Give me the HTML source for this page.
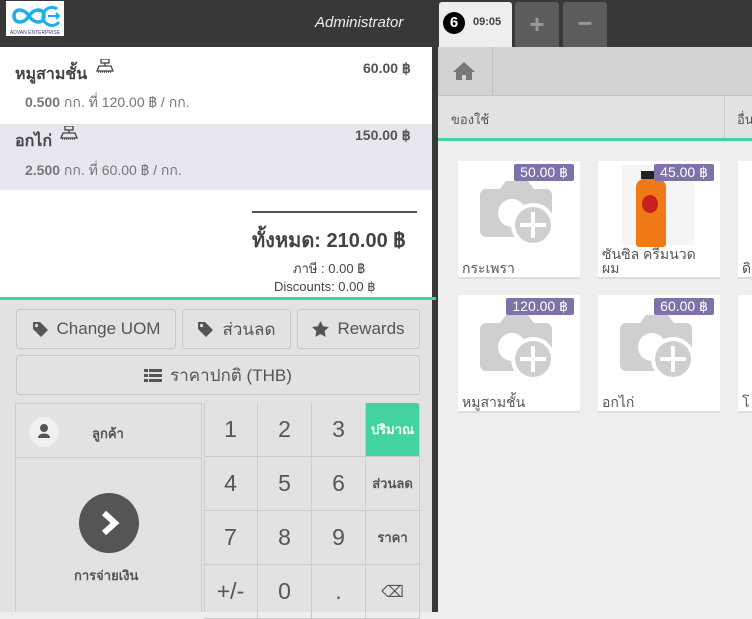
<!DOCTYPE html>
<html><head><meta charset="utf-8"><style>
*{box-sizing:border-box;margin:0;padding:0}
body{width:752px;height:612px;overflow:hidden;font-family:"Liberation Sans","Noto Sans CJK SC",sans-serif;background:#efeeee;position:relative;color:#555}
.abs{position:absolute}
.hdr{left:0;top:0;width:752px;height:47px;background:#383838}
.btn{position:absolute;border:1px solid #c8c8c8;border-radius:3px;background:#e2e2e2;color:#555;font-size:17px;display:flex;align-items:center;justify-content:center;gap:8px}
.cell{position:absolute;border-right:1px solid #ccc;border-bottom:1px solid #ccc;display:flex;align-items:center;justify-content:center;font-size:23px;color:#555;width:54px;height:54px}
.mode{font-size:13px;font-weight:bold}
.card{position:absolute;width:122px;height:116px;background:#fff;box-shadow:0 2px 0 #ddd}
.price{position:absolute;right:6px;top:3px;background:#7f71a9;color:#fff;font-size:14px;padding:0 6px;height:17px;line-height:17px;border-radius:2px}
.name{position:absolute;left:4px;bottom:2px;font-size:14px;color:#555;line-height:14px}
</style></head><body>
<svg width="0" height="0" style="position:absolute"><defs>
<g id="cam"><path d="M8 14h14l6-8h22l6 8h12a6 6 0 0 1 6 6v36a6 6 0 0 1-6 6H8a6 6 0 0 1-6-6V20a6 6 0 0 1 6-6z" fill="#cfcfcf"/><circle cx="34" cy="38" r="14" fill="#fff"/><circle cx="55" cy="50" r="22" fill="#fff"/><circle cx="55" cy="50" r="18" fill="#cfcfcf"/><path d="M55 37v26M42 50h26" stroke="#fff" stroke-width="4"/></g>
<g id="tag"><path d="M1 1h7l8 8-7 7-8-8z" fill="#555"/><circle cx="4.5" cy="4.5" r="1.6" fill="#e2e2e2"/></g>
<g id="scale"><rect x="5" y="0" width="8" height="4" fill="none" stroke="#444" stroke-width="1.3"/><path d="M9 4v3M3 7h12l2 5H1z" fill="none" stroke="#444" stroke-width="1.3"/><path d="M2 13h14" stroke="#444" stroke-width="1.5" stroke-dasharray="1 1"/></g>
</defs></svg>
<div class="abs hdr"></div>
<div class="abs" style="left:6px;top:1px;width:58px;height:35px;background:#fff">
<svg width="58" height="35" viewBox="0 0 58 35"><path d="M8 15c0-8 10-8 15 0s15 8 15 0-10-8-15 0-15 8-15 0z" fill="none" stroke="#1ab0ec" stroke-width="3.5"/><path d="M51 8a9 9 0 1 0 2 13" fill="none" stroke="#1ab0ec" stroke-width="3"/><path d="M42 15h11M50 12l3 3-3 3" stroke="#1ab0ec" stroke-width="2" fill="none"/><text x="29" y="33" font-size="5" text-anchor="middle" fill="#3a3a8a" font-family="Liberation Sans">ADVAN ENTERPRISE</text></svg></div>
<div class="abs" style="left:315px;top:14px;color:#eee;font-style:italic;font-size:15px">Administrator</div>
<div class="abs" style="left:439px;top:2px;width:73px;height:45px;background:#eee;border-radius:3px 3px 0 0"></div>
<div class="abs" style="left:443px;top:12px;width:22px;height:22px;border-radius:50%;background:#000;color:#fff;font-weight:bold;font-size:15px;text-align:center;line-height:22px">6</div>
<div class="abs" style="left:473px;top:16px;font-size:11px;font-weight:bold;color:#444">09:05</div>
<div class="abs" style="left:515px;top:2px;width:44px;height:45px;background:#5c5c5c;border-radius:3px 3px 0 0;color:#999;font-size:26px;font-weight:bold;text-align:center;line-height:44px">+</div>
<div class="abs" style="left:563px;top:2px;width:44px;height:45px;background:#5c5c5c;border-radius:3px 3px 0 0;color:#999;font-size:26px;font-weight:bold;text-align:center;line-height:42px">−</div>
<div class="abs" style="left:0;top:47px;width:432px;height:77px;background:#fff"></div>
<div class="abs" style="left:0;top:124px;width:432px;height:66px;background:#e8e6ef"></div>
<div class="abs" style="left:0;top:190px;width:432px;height:107px;background:#fff"></div>
<div class="abs" style="left:432px;top:47px;width:6px;height:565px;background:#383838"></div>
<div class="abs" style="left:0;top:297px;width:436px;height:3px;background:#43d39e"></div>
<div class="abs" style="left:0;top:300px;width:432px;height:312px;background:#e2e2e2"></div>
<div class="abs" style="left:15px;top:62px;font-size:16px;font-weight:bold;color:#444">หมูสามชั้น</div>
<svg class="abs" style="left:96px;top:59px" width="18" height="15"><use href="#scale"/></svg>
<div class="abs" style="left:363px;top:60px;font-size:14px;font-weight:bold;color:#555">60.00 ฿</div>
<div class="abs" style="left:25px;top:92px;font-size:14px;color:#777"><b>0.500</b> กก. ที่ 120.00 ฿ / กก.</div>
<div class="abs" style="left:15px;top:129px;font-size:16px;font-weight:bold;color:#444">อกไก่</div>
<svg class="abs" style="left:60px;top:126px" width="18" height="15"><use href="#scale"/></svg>
<div class="abs" style="left:355px;top:127px;font-size:14px;font-weight:bold;color:#555">150.00 ฿</div>
<div class="abs" style="left:25px;top:160px;font-size:14px;color:#777"><b>2.500</b> กก. ที่ 60.00 ฿ / กก.</div>
<div class="abs" style="left:252px;top:211px;width:165px;height:2px;background:#555"></div>
<div class="abs" style="left:252px;top:224px;font-size:20px;font-weight:bold;color:#444">ทั้งหมด: 210.00 ฿</div>
<div class="abs" style="left:293px;top:258px;font-size:13px;color:#444">ภาษี : 0.00 ฿</div>
<div class="abs" style="left:274px;top:279px;font-size:13px;color:#444">Discounts: 0.00 ฿</div>
<div class="btn" style="left:16px;top:309px;width:160px;height:40px"><svg width="17" height="17"><use href="#tag"/></svg>Change UOM</div>
<div class="btn" style="left:182px;top:309px;width:109px;height:40px"><svg width="17" height="17"><use href="#tag"/></svg>ส่วนลด</div>
<div class="btn" style="left:297px;top:309px;width:123px;height:40px"><svg width="17" height="16" viewBox="0 0 24 23"><path d="M12 0l3.7 7.5 8.3 1.2-6 5.8 1.4 8.3L12 18.9 4.6 22.8 6 14.5 0 8.7l8.3-1.2z" fill="#555"/></svg>Rewards</div>
<div class="btn" style="left:16px;top:355px;width:404px;height:40px"><svg width="18" height="15"><rect x="0" y="1" width="4" height="3" fill="#555"/><rect x="5" y="1" width="13" height="3" fill="#555"/><rect x="0" y="6" width="4" height="3" fill="#555"/><rect x="5" y="6" width="13" height="3" fill="#555"/><rect x="0" y="11" width="4" height="3" fill="#555"/><rect x="5" y="11" width="13" height="3" fill="#555"/></svg>ราคาปกติ (THB)</div>
<div class="abs" style="left:15px;top:403px;width:187px;height:209px;border:1px solid #ccc;border-bottom:none"></div>
<div class="abs" style="left:15px;top:457px;width:187px;height:1px;background:#ccc"></div>
<div class="abs" style="left:29px;top:417px;width:30px;height:30px;border-radius:50%;background:#f0f0f0"><svg width="30" height="30"><circle cx="15" cy="11" r="4" fill="#555"/><path d="M9 21c0-6 12-6 12 0z" fill="#555"/></svg></div>
<div class="abs" style="left:92px;top:423px;font-size:13px;font-weight:bold">ลูกค้า</div>
<div class="abs" style="left:79px;top:493px;width:60px;height:60px;border-radius:50%;background:#555"><svg width="60" height="60"><path d="M25 20l11 10-11 10" fill="none" stroke="#fff" stroke-width="6"/></svg></div>
<div class="abs" style="left:74px;top:565px;font-size:13px;font-weight:bold">การจ่ายเงิน</div>
<div class="abs" style="left:204px;top:403px;width:1px;height:209px;background:#ccc"></div>
<div class="cell" style="left:204px;top:403px">1</div><div class="cell" style="left:258px;top:403px">2</div><div class="cell" style="left:312px;top:403px">3</div>
<div class="cell mode" style="left:366px;top:403px;background:#43d39e;color:#fff;border-radius:0 3px 0 0">ปริมาณ</div>
<div class="cell" style="left:204px;top:457px">4</div><div class="cell" style="left:258px;top:457px">5</div><div class="cell" style="left:312px;top:457px">6</div>
<div class="cell mode" style="left:366px;top:457px">ส่วนลด</div>
<div class="cell" style="left:204px;top:511px">7</div><div class="cell" style="left:258px;top:511px">8</div><div class="cell" style="left:312px;top:511px">9</div>
<div class="cell mode" style="left:366px;top:511px">ราคา</div>
<div class="cell" style="left:204px;top:565px">+/-</div><div class="cell" style="left:258px;top:565px">0</div><div class="cell" style="left:312px;top:565px">.</div>
<div class="cell" style="left:366px;top:565px;font-size:16px">⌫</div>
<div class="abs" style="left:438px;top:47px;width:314px;height:49px;background:#d3d3d3;border-bottom:1px solid #c5c5c5"></div>
<div class="abs" style="left:492px;top:47px;width:1px;height:48px;background:#c0c0c0"></div>
<svg class="abs" style="left:452px;top:61px" width="24" height="20"><path d="M12 1L1 11h3v8h6v-5h4v5h6v-8h3z" fill="#777"/></svg>
<div class="abs" style="left:438px;top:96px;width:314px;height:42px;background:#e2e2e2"></div>
<div class="abs" style="left:724px;top:96px;width:1px;height:42px;background:#c8c8c8"></div>
<div class="abs" style="left:451px;top:109px;font-size:13px">ของใช้</div>
<div class="abs" style="left:737px;top:109px;font-size:13px">อื่น</div>
<div class="abs" style="left:438px;top:138px;width:314px;height:3px;background:#43d39e"></div>
<div class="card" style="left:458px;top:161px"><svg class="abs" style="left:20px;top:14px" width="80" height="76"><use href="#cam"/></svg><div class="price">50.00 ฿</div><div class="name">กระเพรา</div></div>
<div class="card" style="left:598px;top:161px"><div class="abs" style="left:24px;top:4px;width:72px;height:80px;background:#f5f5f5"></div><div class="abs" style="left:43px;top:10px;width:13px;height:8px;background:#222"></div><div class="abs" style="left:38px;top:18px;width:30px;height:68px;background:#f07a18;border-radius:8px 8px 3px 3px"></div><div class="abs" style="left:44px;top:34px;width:16px;height:18px;border-radius:50%;background:#c8201c"></div><div class="price">45.00 ฿</div><div class="name">ซันซิล ครีมนวด<br>ผม</div></div>
<div class="card" style="left:738px;top:161px"><div class="name">ดิ</div></div>
<div class="card" style="left:458px;top:295px"><svg class="abs" style="left:20px;top:14px" width="80" height="76"><use href="#cam"/></svg><div class="price">120.00 ฿</div><div class="name">หมูสามชั้น</div></div>
<div class="card" style="left:598px;top:295px"><svg class="abs" style="left:20px;top:14px" width="80" height="76"><use href="#cam"/></svg><div class="price">60.00 ฿</div><div class="name">อกไก่</div></div>
<div class="card" style="left:738px;top:295px"><div class="name">โ</div></div>
</body></html>
